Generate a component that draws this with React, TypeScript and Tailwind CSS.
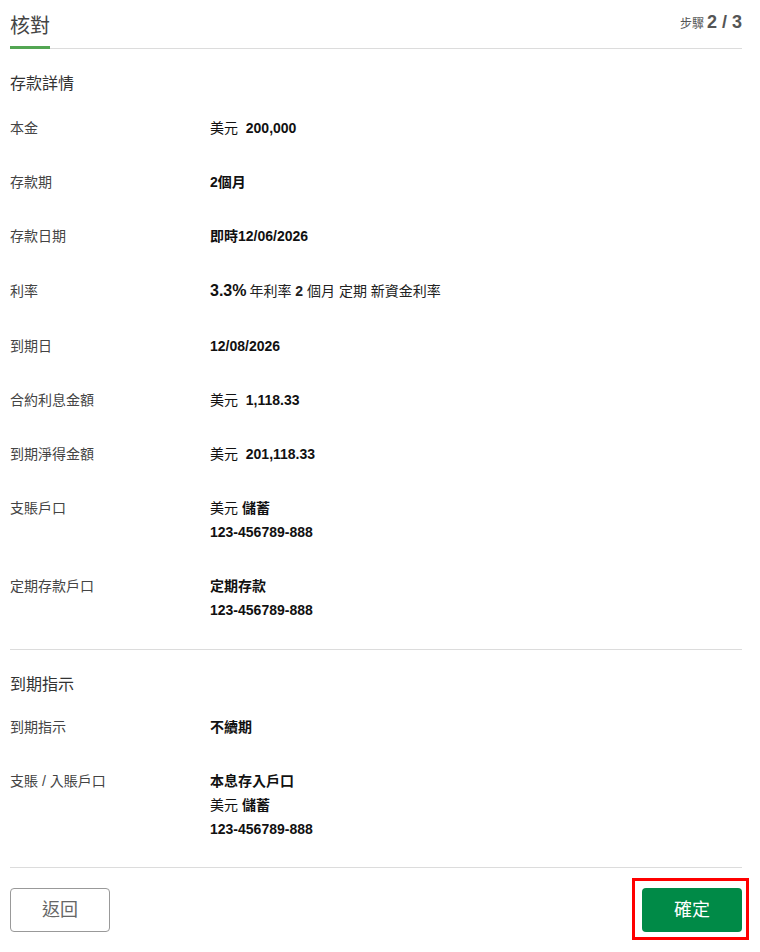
import React from 'react';

type Row = {
  label: string;
  lines: React.ReactNode[];
  tall?: boolean;
};

const depositRows: Row[] = [
  { label: '本金', lines: [<><span className="font-normal">美元</span>&nbsp; 200,000</>] },
  { label: '存款期', lines: ['2個月'] },
  { label: '存款日期', lines: ['即時12/06/2026'] },
  {
    label: '利率',
    tall: true,
    lines: [
      <>
        <span className="text-[16px]">3.3%</span>
        <span className="ml-[3px] font-normal text-[#222]">年利率 <span className="font-bold">2</span> 個月 定期 新資金利率</span>
      </>,
    ],
  },
  { label: '到期日', lines: ['12/08/2026'] },
  { label: '合約利息金額', lines: [<><span className="font-normal">美元</span>&nbsp; 1,118.33</>] },
  { label: '到期淨得金額', lines: [<><span className="font-normal">美元</span>&nbsp; 201,118.33</>] },
  { label: '支賬戶口', lines: [<><span className="font-normal">美元</span> 儲蓄</>, '123-456789-888'] },
  { label: '定期存款戶口', lines: ['定期存款', '123-456789-888'] },
];

const maturityRows: Row[] = [
  { label: '到期指示', lines: ['不續期'] },
  {
    label: '支賬 / 入賬戶口',
    lines: ['本息存入戶口', <><span className="font-normal">美元</span> 儲蓄</>, '123-456789-888'],
  },
];

function DetailRow({ row }: { row: Row }) {
  return (
    <div className={`flex leading-[24px] ${row.tall ? 'py-[16px]' : 'py-[15px]'}`}>
      <div className="w-[200px] shrink-0 text-[14px] text-[#444]">{row.label}</div>
      <div className="flex flex-col text-[14px] font-bold text-[#111]">
        {row.lines.map((line, i) => (
          <div key={i}>{line}</div>
        ))}
      </div>
    </div>
  );
}

export default function App() {
  return (
    <div
      className="min-h-[952px] bg-white"
      style={{ fontFamily: '"Liberation Sans", Arial, "Noto Sans CJK TC", sans-serif' }}
    >
      <div className="ml-[10px] w-[732px]">
        {/* header */}
        <div className="flex items-end justify-between border-b border-[#dcdcdc] h-[49px]">
          <div className="relative pb-[10px] text-[20px] leading-[24px] text-[#444]">
            核對
            <div className="absolute left-0 bottom-[-1px] h-[3px] w-[40px] bg-[#53a653]" />
          </div>
          <div className="pb-[12px] flex items-baseline gap-[3px] text-[#555]">
            <span className="text-[12px]">步驟</span>
            <span className="text-[18px] font-bold">2 / 3</span>
          </div>
        </div>

        {/* deposit details */}
        <div className="pt-[23px] mb-[5px] text-[16px] leading-[24px] text-[#333]">存款詳情</div>
        {depositRows.map((r) => (
          <DetailRow key={r.label} row={r} />
        ))}

        <div className="mt-[12px] border-t border-[#dcdcdc]" />

        {/* maturity */}
        <div className="pt-[23px] mb-[3px] text-[16px] leading-[24px] text-[#333]">到期指示</div>
        {maturityRows.map((r) => (
          <DetailRow key={r.label} row={r} />
        ))}

        <div className="mt-[11px] border-t border-[#dcdcdc]" />

        {/* actions */}
        <div className="flex items-start justify-between pt-[20px]">
          <button className="h-[44px] w-[100px] rounded-[4px] border border-[#999] bg-white text-[18px] text-[#666]">
            返回
          </button>
          <div className="-mt-[10px] -mr-[7px] border-[3px] border-[#f00] pt-[7px] pl-[7px] pr-[4px] pb-[5px]">
            <button className="block h-[44px] w-[100px] rounded-[4px] bg-[#008a47] text-[18px] text-white">
              確定
            </button>
          </div>
        </div>
      </div>
    </div>
  );
}
